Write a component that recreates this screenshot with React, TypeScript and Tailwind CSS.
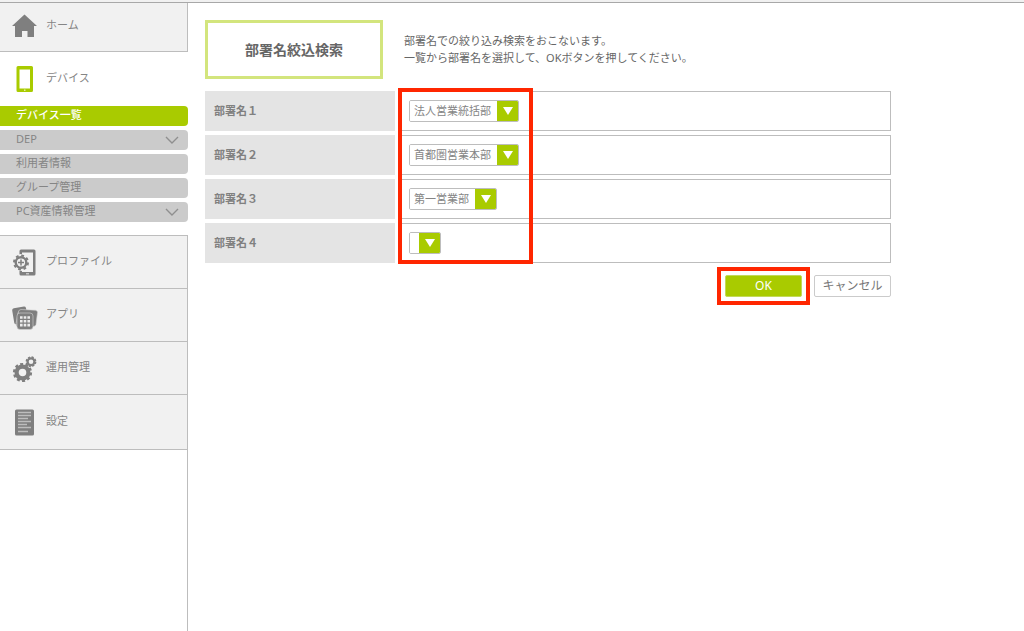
import React from 'react';

type IconProps = { children: React.ReactNode };

const MenuIcon = ({ children }: IconProps) => (
  <svg viewBox="0 0 28 32" className="w-7 h-8 shrink-0" fill="none" aria-hidden="true">
    {children}
  </svg>
);

const HomeIcon = () => (
  <MenuIcon>
    <path d="M13.500 3.500 L26 15 h-3 v11 h-6.500 v-6 h-5.500 v6 h-7 v-11 h-3 Z" fill="#7f7f7f" />
  </MenuIcon>
);

const DeviceIcon = () => (
  <MenuIcon>
    <path
      d="M7 3 h13.500 a1.500 1.500 0 0 1 1.500 1.500 v23 a1.500 1.500 0 0 1 -1.500 1.500 h-13.500 a1.500 1.500 0 0 1 -1.500 -1.500 v-23 a1.500 1.500 0 0 1 1.500 -1.500 Z M8.500 6.500 v19 h10.500 v-19 Z"
      fill="#a9cb00"
      fillRule="evenodd"
    />
    <rect x="13" y="26.500" width="1.500" height="1.500" fill="#e4f0a8" />
  </MenuIcon>
);

const ProfileIcon = () => (
  <MenuIcon>
    <path
      d="M10 3.500 h13 a1.500 1.500 0 0 1 1.500 1.500 v23 a1.500 1.500 0 0 1 -1.500 1.500 h-13 a1.500 1.500 0 0 1 -1.500 -1.500 v-23 a1.500 1.500 0 0 1 1.500 -1.500 Z M11 6.500 v19.500 h11 v-19.500 Z"
      fill="#7f7f7f"
      fillRule="evenodd"
    />
    <rect x="15" y="27" width="3" height="1.500" fill="#c4c4c4" />
    <circle cx="10" cy="16.500" r="8.500" fill="#f1f1f1" />
    <circle cx="10" cy="16.500" r="7" stroke="#7f7f7f" strokeWidth="2" strokeDasharray="2.800 2.698" />
    <circle cx="10" cy="16.500" r="5.300" stroke="#7f7f7f" strokeWidth="2.400" />
    <path d="M10 13.500 v6 M7 16.500 h6" stroke="#7f7f7f" strokeWidth="1.500" />
  </MenuIcon>
);

const AppIcon = () => (
  <MenuIcon>
    <path d="M2.800 9.300 L13 7.600 Q14.500 7.500 15 9 L15.300 11 L9.500 11 L7 13 L5.500 25 Q3.600 25.500 3.300 24 L1.200 11.500 Q1 9.700 2.800 9.300 Z" fill="#7f7f7f" />
    <path d="M10 10.500 L24.500 11.200 Q26.700 11.500 26.500 13.500 L25 25.500 Q24.500 27.500 22 27.500 L7 27.500 Q4.800 27 5 24.500 L7.500 12.500 Q8 10.500 10 10.500 Z" fill="#7f7f7f" stroke="#d4d4d4" strokeWidth="0.600" />
    <rect x="6" y="14" width="16" height="16.500" rx="3" fill="#7f7f7f" stroke="#d4d4d4" strokeWidth="0.600" />
    <path d="M9 18.500 h10 M9 22.300 h10 M9 26.100 h10" stroke="#ececec" strokeWidth="2.600" strokeDasharray="2.600 1.100" />
  </MenuIcon>
);

const OperationIcon = () => (
  <MenuIcon>
    <circle cx="11.500" cy="20.500" r="8.400" stroke="#7f7f7f" strokeWidth="2.400" strokeDasharray="3 2.278" />
    <circle cx="11.500" cy="20.500" r="5.900" stroke="#7f7f7f" strokeWidth="4.200" />
    <circle cx="20" cy="9.700" r="4.700" stroke="#7f7f7f" strokeWidth="1.400" strokeDasharray="2.200 1.491" />
    <circle cx="20" cy="9.700" r="3.400" stroke="#7f7f7f" strokeWidth="2.200" />
  </MenuIcon>
);

const SettingIcon = () => (
  <MenuIcon>
    <rect x="4" y="3.500" width="19" height="26" rx="1.500" fill="#7f7f7f" />
    <path
      d="M7 6.500 h13 M7 9.500 h13 M7 12.500 h10 M7 15.500 h13 M7 18.500 h9 M7 21.500 h13 M7 25.500 h10"
      stroke="#bdbdbd"
      strokeWidth="1.400"
    />
  </MenuIcon>
);

const Chevron = () => (
  <svg viewBox="0 0 14 8" className="w-3.5 h-2" fill="none" aria-hidden="true">
    <path d="M1 1 L7 7 L13 1" stroke="#8f8f8f" strokeWidth="1.400" />
  </svg>
);

const subMenu = [
  { label: 'デバイス一覧', active: true },
  { label: 'DEP', expandable: true },
  { label: '利用者情報' },
  { label: 'グループ管理' },
  { label: 'PC資産情報管理', expandable: true },
];

const mainMenu = [
  { label: 'プロファイル', icon: <ProfileIcon />, height: 'h-[53px]' },
  { label: 'アプリ', icon: <AppIcon />, height: 'h-[53px]' },
  { label: '運用管理', icon: <OperationIcon />, height: 'h-[53px]' },
  { label: '設定', icon: <SettingIcon />, height: 'h-[55px]' },
];

const departments = [
  { label: '部署名１', value: '法人営業統括部', width: 'w-[110px]' },
  { label: '部署名２', value: '首都圏営業本部', width: 'w-[110px]' },
  { label: '部署名３', value: '第一営業部', width: 'w-[88px]' },
  { label: '部署名４', value: '', width: 'w-8' },
];

const Sidebar = () => (
  <nav className="w-[188px] shrink-0 flex flex-col text-[#858585]">
    <a href="#home" className="h-[49px] flex items-center gap-[7px] pl-[11px] bg-[#f1f1f1] border-r border-b border-[#bdbdbd]">
      <HomeIcon />
      <span className="pb-1">ホーム</span>
    </a>
    <a href="#device" className="h-[54px] flex items-center gap-[7px] pl-[11px]">
      <DeviceIcon />
      <span className="pb-0.5">デバイス</span>
    </a>
    <ul className="flex flex-col gap-1">
      {subMenu.map(item => (
        <li key={item.label}>
          <a
            href="#sub"
            className={`h-5 flex items-center justify-between pl-4 pr-[9px] rounded-r ${
              item.active ? 'bg-[#a9cb00] text-white font-medium' : 'bg-[#cbcbcb]'
            }`}
          >
            <span className="pb-0.5">{item.label}</span>
            {item.expandable && <Chevron />}
          </a>
        </li>
      ))}
    </ul>
    <ul className="mt-[13px] border-t border-r border-[#bdbdbd] bg-[#f1f1f1]">
      {mainMenu.map(item => (
        <li key={item.label}>
          <a href="#menu" className={`${item.height} flex items-center gap-[7px] pl-[11px] border-b border-[#bdbdbd]`}>
            {item.icon}
            <span className="pb-0.5">{item.label}</span>
          </a>
        </li>
      ))}
    </ul>
    <div className="flex-1 border-r border-[#bdbdbd]" />
  </nav>
);

const DepartmentRow = ({ label, value, width, id }: { label: string; value: string; width: string; id: string }) => (
  <div className="h-10 flex gap-[5px]">
    <label htmlFor={id} className="w-[190px] shrink-0 bg-[#e4e4e4] flex items-center pl-[9px] font-bold text-[#808080]">
      {label}
    </label>
    <div className="flex-1 border border-[#bdbdbd] flex items-center pl-2">
      <div className={`${width} h-[22px] relative border border-[#bdbdbd] rounded-[2px] overflow-hidden`}>
        <select id={id} defaultValue={value} className="block w-full h-full appearance-none bg-white pl-1 pr-[22px] leading-5 text-[#858585]">
          <option value={value}>{value}</option>
        </select>
        <span className="absolute inset-y-0 right-0 w-[21px] bg-[#a9cb00] flex items-center justify-center pointer-events-none">
          <svg viewBox="0 0 10 8" className="w-2.5 h-2" aria-hidden="true">
            <path d="M0 0 H10 L5 8 Z" fill="#fff" />
          </svg>
        </span>
      </div>
    </div>
  </div>
);

export default function App() {
  return (
    <div className="min-h-screen flex flex-col bg-white text-[11px] leading-4 font-['Noto_Sans','Noto_Sans_CJK_JP',sans-serif]">
      <header className="h-[3px] shrink-0 bg-[#f1f1f1] border-b border-[#a8a8a8]" />
      <div className="flex-1 flex">
        <Sidebar />
        <main className="flex-1 pt-[17px] pl-[17px] pr-4">
          <div className="max-w-[686px]">
            <div className="flex gap-[21px]">
              <h1 className="w-[178px] h-[59px] shrink-0 border-[3px] border-[#d3e57d] flex items-center justify-center text-sm font-bold text-[#666]">
                部署名絞込検索
              </h1>
              <p className="pt-3 leading-[17px] text-[#666]">
                部署名での絞り込み検索をおこないます。
                <br />
                一覧から部署名を選択して、OKボタンを押してください。
              </p>
            </div>

            <form className="mt-3" onSubmit={e => e.preventDefault()}>
              <div className="relative flex flex-col gap-1">
                {departments.map((d, i) => (
                  <DepartmentRow key={d.label} id={`department-${i + 1}`} {...d} />
                ))}
                <div className="absolute left-[193px] -top-[3px] -bottom-px w-[135px] border-4 border-[#ff2600] pointer-events-none" />
              </div>

              <div className="mt-3 flex justify-end gap-3">
                <div className="relative">
                  <button type="submit" className="block w-[77px] h-[22px] rounded-[2px] border border-[#c3d95a] bg-[#a9cb00] text-white text-xs leading-5">
                    OK
                  </button>
                  <div className="absolute -inset-2 border-4 border-[#ff2600] pointer-events-none" />
                </div>
                <button type="button" className="w-[77px] h-[22px] rounded-[2px] border border-[#cbcbcb] text-[#777] text-xs leading-5">
                  キャンセル
                </button>
              </div>
            </form>
          </div>
        </main>
      </div>
    </div>
  );
}
